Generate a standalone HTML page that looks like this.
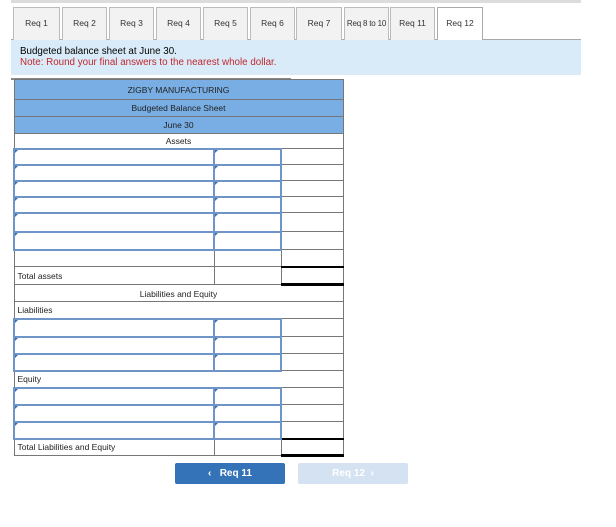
<!DOCTYPE html>
<html><head><style>
*{margin:0;padding:0;box-sizing:border-box}
body{width:616px;height:527px;background:#fff;font-family:"Liberation Sans",Verdana,sans-serif;position:relative;overflow:hidden}
.bar{position:absolute;left:11px;top:0;width:570px;height:3px;background:#dcdcdc}
.tab{position:absolute;top:7px;height:33px;border:1px solid #bbb;border-bottom:none;background:#f2f2f2;font-size:8.5px;color:#333;text-align:center;line-height:31px;white-space:nowrap;overflow:hidden}
.tab.act{background:#fff;border-color:#aaa;top:7px;height:34px}
.tabline{position:absolute;left:11px;top:39px;width:570px;height:1px;background:#aaa}
.info{position:absolute;left:11px;top:40px;width:570px;height:35px;background:#d9ebf8;padding:6px 0 0 9px;font-size:9.8px;line-height:11px}
.info .n{color:#c0282d}
.gl{position:absolute;left:11px;top:78px;width:280px;height:2px;background:#888}
table{position:absolute;left:13px;top:79px;border-collapse:collapse;font-size:8.5px;color:#222}
td{border:1px solid #777;padding:0 3px}
.h td{background:#78aee4;text-align:center}
.inp{border:2px solid #6f95c8;position:relative}
.inp::before{content:"";position:absolute;left:0;top:0;border-left:3px solid #3a6fb5;border-bottom:3px solid transparent}
.btn{position:absolute;top:463px;width:110px;height:21px;font-size:10px;font-weight:bold;color:#fff;text-align:center;line-height:21px;border-radius:2px}
</style></head><body>
<div class="bar"></div>
<div class="tabline"></div>
<div class="tab" style="left:13px;width:47px">Req 1</div>
<div class="tab" style="left:62px;width:45px">Req 2</div>
<div class="tab" style="left:109px;width:45px">Req 3</div>
<div class="tab" style="left:156px;width:45px">Req 4</div>
<div class="tab" style="left:203px;width:45px">Req 5</div>
<div class="tab" style="left:250px;width:45px">Req 6</div>
<div class="tab" style="left:296px;width:46px">Req 7</div>
<div class="tab" style="left:344px;width:45px;font-size:8px;letter-spacing:-0.2px">Req 8 to 10</div>
<div class="tab" style="left:390px;width:45px">Req 11</div>
<div class="tab act" style="left:437px;width:46px">Req 12</div>
<div class="info">Budgeted balance sheet at June 30.<br><span class="n">Note: Round your final answers to the nearest whole dollar.</span></div>
<div class="gl"></div>
<table>
<colgroup><col style="width:200px"><col style="width:67px"><col style="width:62px"></colgroup>
<tr class="h" style="height:20px"><td colspan="3">ZIGBY MANUFACTURING</td></tr>
<tr class="h" style="height:17px"><td colspan="3">Budgeted Balance Sheet</td></tr>
<tr class="h" style="height:17px"><td colspan="3">June 30</td></tr>
<tr style="height:15px"><td colspan="3" style="text-align:center">Assets</td></tr>
<tr style="height:16px"><td class="inp"></td><td class="inp"></td><td></td></tr>
<tr style="height:16px"><td class="inp"></td><td class="inp"></td><td></td></tr>
<tr style="height:16px"><td class="inp"></td><td class="inp"></td><td></td></tr>
<tr style="height:16px"><td class="inp"></td><td class="inp"></td><td></td></tr>
<tr style="height:19px"><td class="inp"></td><td class="inp" style="border-top:2px solid #000"></td><td></td></tr>
<tr style="height:18px"><td class="inp"></td><td class="inp"></td><td></td></tr>
<tr style="height:17px"><td></td><td></td><td style="border-bottom:2px solid #000"></td></tr>
<tr style="height:18px"><td>Total assets</td><td></td><td style="border-bottom:3px solid #000"></td></tr>
<tr style="height:17px"><td colspan="3" style="text-align:center">Liabilities and Equity</td></tr>
<tr style="height:17px"><td colspan="3">Liabilities</td></tr>
<tr style="height:18px"><td class="inp"></td><td class="inp"></td><td></td></tr>
<tr style="height:17px"><td class="inp"></td><td class="inp"></td><td></td></tr>
<tr style="height:17px"><td class="inp"></td><td class="inp" style="border-top:2px solid #000"></td><td></td></tr>
<tr style="height:17px"><td colspan="3">Equity</td></tr>
<tr style="height:17px"><td class="inp"></td><td class="inp"></td><td></td></tr>
<tr style="height:17px"><td class="inp"></td><td class="inp"></td><td></td></tr>
<tr style="height:17px"><td class="inp"></td><td class="inp"></td><td style="border-bottom:2px solid #000"></td></tr>
<tr style="height:17px"><td>Total Liabilities and Equity</td><td></td><td style="border-bottom:3px solid #000"></td></tr>
</table>
<div class="btn" style="left:175px;background:#3473b8">&#8249;&nbsp;&nbsp; Req 11</div>
<div class="btn" style="left:298px;background:#d5e2f1">Req 12 &nbsp;&#8250;</div>
</body></html>
